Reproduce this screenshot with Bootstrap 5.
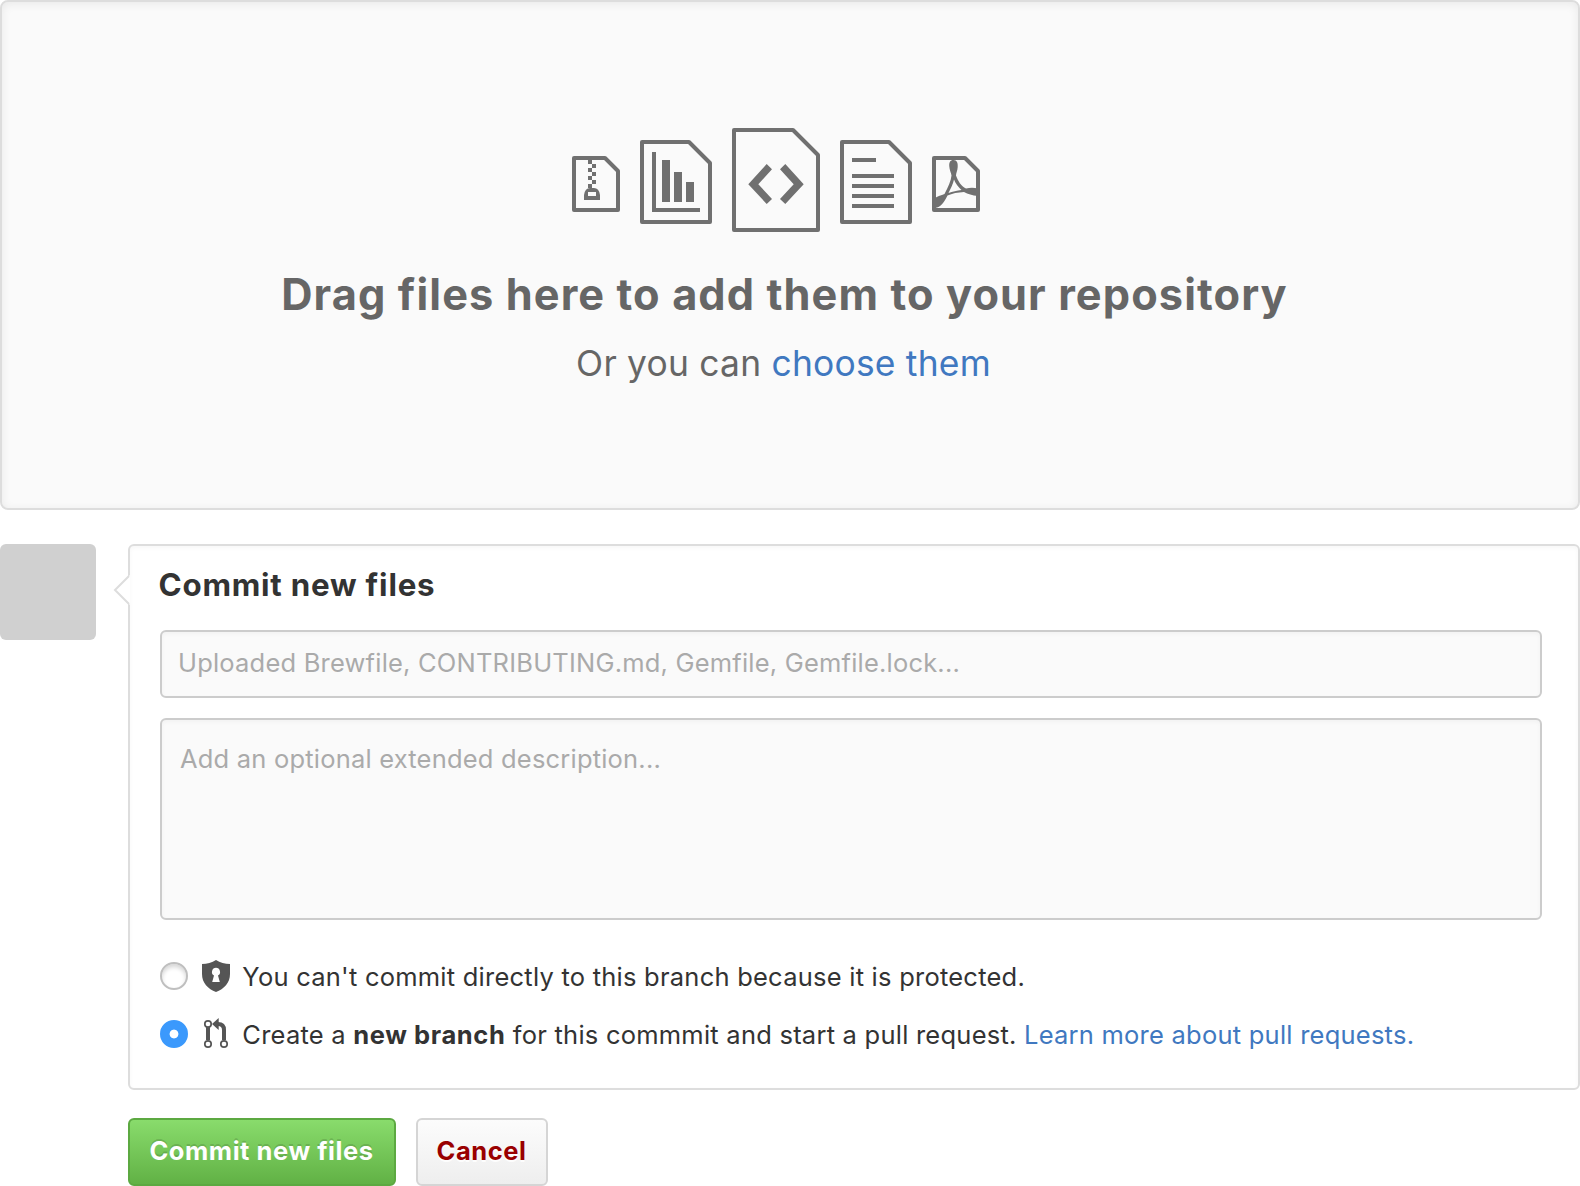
<!DOCTYPE html>
<html lang="en">
<head>
<meta charset="utf-8">
<meta name="viewport" content="width=device-width, initial-scale=1">
<title>Upload files</title>
<link href="https://cdn.jsdelivr.net/npm/bootstrap@5.3.0/dist/css/bootstrap.min.css" rel="stylesheet">
<style>
  body { font-family: Inter, "Liberation Sans", sans-serif; font-size: 25.5px; line-height: 38px; letter-spacing: .235px; color: #333; background: #fff; overflow: hidden; }
  a { color: #4078c0; text-decoration: none; }
  .dropzone { height: 510px; border: 2px solid #ddd; border-radius: 8px; background: #fafafa; color: #666; padding: 126px 11px 0 0; box-shadow: inset 0 2px 10px rgba(0,0,0,.07); }
  .file-icons { gap: 20px; height: 104px; margin-right: 17px; fill: none; stroke: #707070; stroke-width: 4; stroke-linejoin: round; }
  .file-icons .solid { fill: #707070; stroke: none; }
  .file-icons .mid { margin-top: 4px; }
  .file-icons .tiny { margin-top: 8px; }
  .drop-title { font-size: 43.3px; line-height: 52px; letter-spacing: 1.1px; font-weight: 700; margin: 36px 0 0; }
  .drop-hint { font-size: 35.4px; line-height: 44px; letter-spacing: .22px; margin: 22px 2px 0 0; }
  .commit-area { margin-top: 34px; gap: 32px; }
  .avatar-box { width: 96px; height: 96px; border-radius: 6px; background: #d0d0d0; }
  .commit-form { height: 546px; border: 2px solid #ddd; border-radius: 6px; padding: 19px 36px 0 30px; box-shadow: inset 0 2px 4px rgba(0,0,0,.035); }
  .pointer-tip { left: -17px; top: 29px; }
  .commit-form h2 { font-size: 31.3px; line-height: 40px; letter-spacing: .78px; font-weight: 700; margin: 0 0 25px -1.5px; }
  .commit-form .form-control { font-size: inherit; letter-spacing: .2px; line-height: 38px; border: 2px solid #ccc; border-radius: 6px; background: #fafafa; box-shadow: inset 0 2px 4px rgba(0,0,0,.035); resize: none; }
  .commit-form .form-control::placeholder { color: #aaa; opacity: 1; }
  .summary-field { height: 68px; padding: 0 16px 4px; }
  .commit-form .details-field { height: 202px; padding: 20px 18px; margin-top: 20px; }
  .choice { height: 38px; }
  .choice span { padding-top: 2px; }
  .choice .form-check-input { width: 28px; height: 28px; margin: 0 14px 0 0; border: 2px solid #bfbfbf; box-shadow: inset 0 3px 4px rgba(0,0,0,.16); background-color: #fff; }
  .choice .form-check-input:checked { border-color: #3b99fc; background: radial-gradient(circle, #fff 0 4px, #3b99fc 4.8px); background-origin: border-box; box-shadow: none; }
  .choice svg { margin-right: 12.3px; }
  .choice b { letter-spacing: .6px; font-weight: 700; }
  .actions { margin: 28px 0 0 128px; gap: 20px; }
  .actions .btn { height: 68px; border-width: 2px; border-radius: 6px; font-size: 25.5px; line-height: 38px; font-weight: 700; letter-spacing: .55px; padding: 0 1px 2px 0; }
  .btn-commit { width: 268px; color: #fff; border-color: #5ca941; background: linear-gradient(#8add6d, #60b044) border-box; text-shadow: 0 -2px 0 rgba(0,0,0,.15); }
  .btn-discard { width: 132px; color: #900; border-color: #d5d5d5; background: linear-gradient(#fcfcfc, #eee); text-shadow: 0 2px 0 rgba(255,255,255,.9); }
</style>
<script src="https://cdn.jsdelivr.net/npm/bootstrap@5.3.0/dist/js/bootstrap.bundle.min.js" defer></script>
</head>
<body>
<section class="dropzone d-flex flex-column align-items-center text-center">
  <div class="file-icons d-flex align-items-center">
    <svg class="tiny" width="48" height="56" viewBox="0 0 48 56">
      <path d="M2 2H33L46 15V54H2Z"/>
      <path class="solid" fill-rule="evenodd" d="M16 4h4v4h-4zM20 8h4v4h-4zM16 12h4v4h-4zM20 16h4v4h-4zM16 20h4v4h-4zM20 24h4v4h-4zM16 28h4v4h-4zM12 44V39Q13 32 18 32H22Q27 32 28 39V44ZM16 36V40H24V36Z"/>
    </svg>
    <svg class="mid" width="72" height="84" viewBox="0 0 72 84">
      <path d="M2 2H49L70 23V82H2Z"/>
      <path class="solid" d="M12 12h4v56h44v4H12zM22 20h8v42h-8zM34 32h8v30h-8zM46 42h8v20h-8z"/>
    </svg>
    <svg width="88" height="104" viewBox="0 0 88 104">
      <path d="M2 2H61L86 27V102H2Z"/>
      <path class="solid" d="M34.7 36L40 41.2L26.3 56.2L40 71L34.7 76L16.3 56.2ZM53.3 36L48 41.2L61.7 56.2L48 71L53.3 76L71.7 56.2Z"/>
    </svg>
    <svg class="mid" width="72" height="84" viewBox="0 0 72 84">
      <path d="M2 2H49L70 23V82H2Z"/>
      <path class="solid" d="M12 18h24v4H12zM12 34h42v4H12zM12 44h42v4H12zM12 54h42v4H12zM12 64h42v4H12z"/>
    </svg>
    <svg class="tiny" width="48" height="56" viewBox="0 0 48 56">
      <path d="M2 2H33L46 15V54H2Z"/>
      <path class="solid" d="M21.5 4C25 4 26 7 25.7 11C25.5 15 24 17 24 19.5C26 25 29 30 34 32.5C38 31.5 42 31.5 46 32.5V40C40 39.500 36 38 32 36C26 36.300 20 37.500 15.500 39.500C12 46 9 51.500 3 52V42C6 40 9 39.500 12.500 38C16 31 19 25 19.500 19.500C19.200 17 17.500 14 17.300 10.500C17 6.500 18 4 21.500 4ZM22 23.500C21 28 18.500 33 16.500 37C20.500 35.700 25 34.700 29.500 34C26.500 31.500 23.500 27.500 22 23.500Z"/>
    </svg>
  </div>
  <h1 class="drop-title">Drag files here to add them to your repository</h1>
  <p class="drop-hint">Or you can <a href="#">choose them</a></p>
</section>

<section class="commit-area d-flex align-items-start">
  <div class="avatar-box flex-shrink-0"></div>
  <form class="commit-form position-relative flex-grow-1">
    <svg class="pointer-tip position-absolute" width="18" height="30" viewBox="0 0 18 30"><path d="M17 0V30L16 29L2 15L16 1Z" fill="#fff"/><path d="M16 1L2 15L16 29" fill="none" stroke="#ddd" stroke-width="2"/></svg>
    <h2>Commit new files</h2>
    <input class="form-control summary-field" type="text" placeholder="Uploaded Brewfile, CONTRIBUTING.md, Gemfile, Gemfile.lock...">
    <textarea class="form-control details-field" placeholder="Add an optional extended description..."></textarea>
    <label class="choice d-flex align-items-center" style="margin-top:37px">
      <input class="form-check-input" type="radio" name="target">
      <svg width="28" height="32" viewBox="0 0 28 32"><path fill="#555" fill-rule="evenodd" d="M14 0C10 2.500 5 4 0 4V14C0 23 6 29 14 32C22 29 28 23 28 14V4C23 4 18 2.500 14 0ZM14 7.800A4.200 4.200 0 0 0 12 15.600L10.200 22H17.800L16 15.600A4.200 4.200 0 0 0 14 7.800Z"/></svg>
      <span>You can't commit directly to this branch because it is protected.</span>
    </label>
    <label class="choice d-flex align-items-center" style="margin-top:20px">
      <input class="form-check-input" type="radio" name="target" checked>
      <svg width="28" height="32" viewBox="0 0 28 32" fill="none" stroke="#555"><path stroke-width="4" d="M6 9V22M22 22V12Q22 6 16 6"/><path fill="#555" stroke="none" d="M10 6L16.700 0V12Z"/><g stroke-width="1.700" fill="#fff"><circle cx="6" cy="6" r="3.200"/><circle cx="6" cy="26" r="3.200"/><circle cx="22" cy="26" r="3.200"/></g></svg>
      <span>Create a <b>new branch</b> for this commmit and start a pull request. <a href="#">Learn more about pull requests.</a></span>
    </label>
  </form>
</section>

<div class="actions d-flex">
  <button class="btn btn-commit" type="button">Commit new files</button>
  <button class="btn btn-discard" type="button">Cancel</button>
</div>
</body>
</html>
